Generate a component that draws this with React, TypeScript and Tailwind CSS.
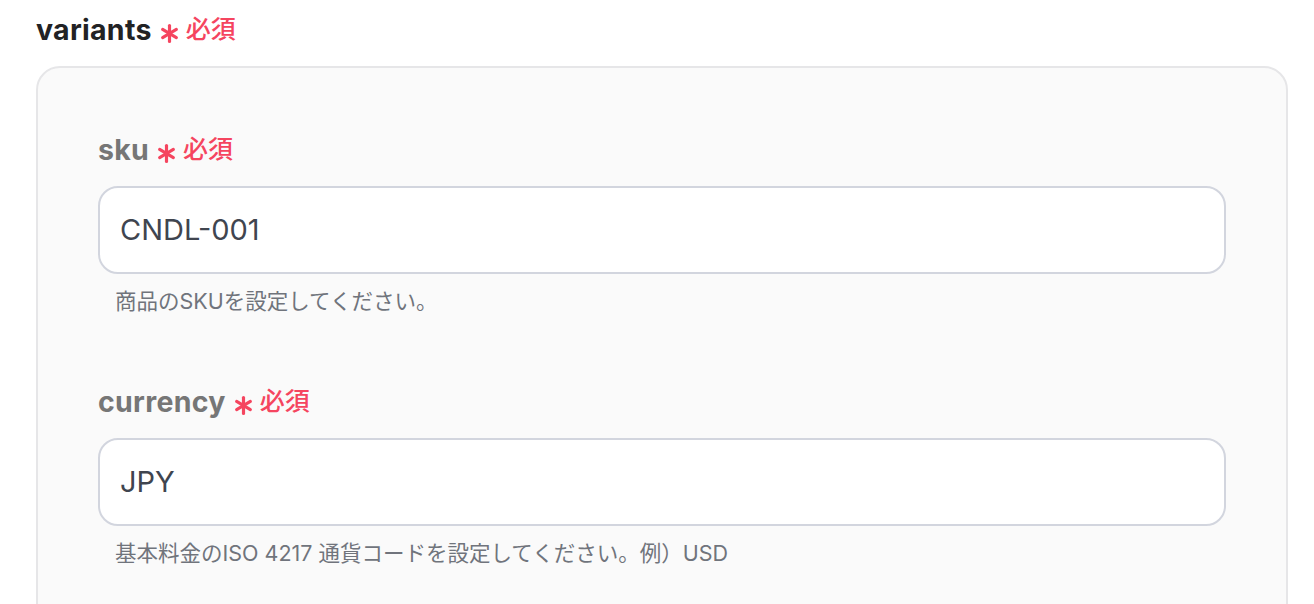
import type { ReactNode } from 'react'

const font = { fontFamily: 'Inter, "Noto Sans CJK JP", sans-serif' }

function Asterisk() {
  return (
    <svg width="19" height="19" viewBox="0 0 18 18" className="mt-[7px] shrink-0" aria-hidden>
      <g stroke="#f5455f" strokeWidth="3" strokeLinecap="round">
        <line x1="9" y1="1.5" x2="9" y2="16.5" />
        <line x1="2.5" y1="5.2" x2="15.5" y2="12.8" />
        <line x1="2.5" y1="12.8" x2="15.5" y2="5.2" />
      </g>
    </svg>
  )
}

function Required() {
  return (
    <span className="flex items-center gap-[7px]">
      <Asterisk />
      <span className="text-[25px] font-medium text-[#f5455f]">必須</span>
    </span>
  )
}

function Label({ children, dark }: { children: ReactNode; dark?: boolean }) {
  return (
    <div className="flex h-8 items-center gap-2">
      <span
        className={
          dark
            ? 'text-[28.5px] font-bold leading-8 tracking-[0.01em] text-[#222224]'
            : 'text-[28.5px] font-bold leading-8 tracking-[0.01em] text-[#767676]'
        }
      >
        {children}
      </span>
      <Required />
    </div>
  )
}

function Field({ label, value, help }: { label: string; value: string; help: string }) {
  return (
    <div className="flex flex-col">
      <Label>{label}</Label>
      <div className="mt-5 flex h-[88px] items-center rounded-[20px] border-2 border-[#d2d5de] bg-white pl-5 text-[29px] text-[#40454f]">
        {value}
      </div>
      <p className="ml-[17px] mt-[13px] text-[21.5px] leading-7 text-[#70747c]">{help}</p>
    </div>
  )
}

export default function App() {
  return (
    <div className="min-h-screen bg-white pl-9 pt-[14px]" style={font}>
      <Label dark>variants</Label>
      <div className="mt-5 flex w-[1252px] flex-col gap-[71px] rounded-[24px] border-2 border-[#e6e6e8] bg-[#fafafa] px-[60px] pb-20 pt-[66px]">
        <Field label="sku" value="CNDL-001" help="商品のSKUを設定してください。" />
        <Field
          label="currency"
          value="JPY"
          help="基本料金のISO 4217 通貨コードを設定してください。例）USD"
        />
      </div>
    </div>
  )
}
